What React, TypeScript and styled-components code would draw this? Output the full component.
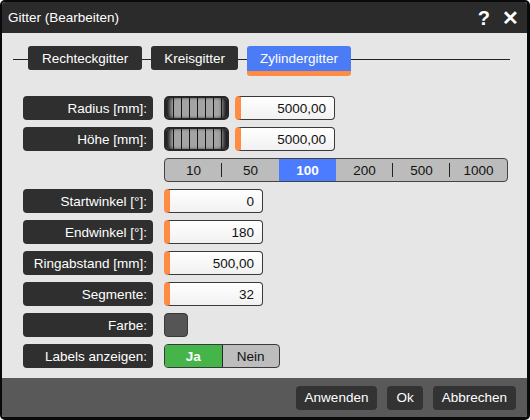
import React, { useState } from "react";
import styled, { createGlobalStyle } from "styled-components";

const GlobalStyle = createGlobalStyle`
  html, body {
    margin: 0;
    padding: 0;
    background: #ffffff;
  }
  body {
    font-family: "Liberation Sans", Arial, sans-serif;
    font-size: 13.5px;
  }
`;

const Window = styled.div`
  width: 530px;
  height: 420px;
  box-sizing: border-box;
  border: 2px solid #0a0a0a;
  border-right-width: 3px;
  border-bottom-width: 3px;
  border-radius: 5px;
  overflow: hidden;
  display: flex;
  flex-direction: column;
  background: #e6e6e6;
`;

const TitleBar = styled.div`
  height: 31px;
  flex: none;
  background: #2b2b2b;
  color: #fff;
  display: flex;
  align-items: center;
  padding: 0 8px 0 6px;
`;

const Title = styled.div`
  flex: 1;
`;

const TitleIcon = styled.span`
  font-size: 20px;
  font-weight: bold;
  margin-left: 12px;
  line-height: 1;
`;

const Body = styled.div`
  flex: 1;
  padding: 13px 16px 0 21px;
`;

const TabStrip = styled.div`
  display: flex;
  align-items: flex-start;
  height: 32px;
  margin: 0 1px 0 -10px;
  background: linear-gradient(#222, #222) no-repeat 0 13px / 100% 1px;
`;

const Tab = styled.div<{ active?: boolean }>`
  height: ${(p) => (p.active ? "25px" : "24px")};
  padding: 0 13px;
  margin-left: 9px;
  border-radius: 3px;
  display: flex;
  align-items: center;
  justify-content: center;
  color: #fff;
  background: ${(p) => (p.active ? "#4b7bf5" : "#2f2f2f")};
  border-bottom: ${(p) => (p.active ? "5px solid #ff8c42" : "none")};
  &:first-child {
    margin-left: 15px;
    padding: 0 14px;
  }
`;

const Form = styled.div`
  margin-top: 18px;
  display: flex;
  flex-direction: column;
  gap: 7px;
`;

const Row = styled.div`
  display: flex;
  align-items: center;
  height: 24px;
  gap: 6px;
`;

const Label = styled.div`
  width: 130px;
  height: 24px;
  margin-right: 5px;
  border-radius: 4px;
  background: #2f2f2f;
  color: #fff;
  display: flex;
  align-items: center;
  justify-content: flex-end;
  padding-right: 6px;
  box-sizing: border-box;
`;

const Jog = styled.div`
  width: 65px;
  height: 24px;
  box-sizing: border-box;
  border: 2px solid #262626;
  border-radius: 5px;
  background: repeating-linear-gradient(
      90deg,
      #a4a4a4 0 7px,
      #161616 7px 8px
    ),
    #a4a4a4;
  box-shadow: inset 6px 0 4px -2px #1c1c1c, inset -6px 0 4px -2px #1c1c1c;
`;

const Input = styled.div<{ w: number }>`
  width: ${(p) => p.w}px;
  height: 24px;
  box-sizing: border-box;
  border: 1px solid #3a3a3a;
  border-left: 6px solid #ff8c42;
  border-radius: 4px;
  background: linear-gradient(#ffffff, #f1f1f1);
  display: flex;
  align-items: center;
  justify-content: flex-end;
  padding-right: 8px;
  color: #111;
`;

const Steps = styled.div`
  margin-left: 141px;
  width: 344px;
  height: 24px;
  box-sizing: border-box;
  border: 1px solid #444;
  border-radius: 4px;
  background: #bcbcbc;
  display: flex;
  align-items: stretch;
  overflow: hidden;
`;

const Step = styled.div<{ active?: boolean }>`
  flex: 1;
  display: flex;
  align-items: center;
  justify-content: center;
  position: relative;
  color: ${(p) => (p.active ? "#fff" : "#111")};
  font-weight: ${(p) => (p.active ? "bold" : "normal")};
  background: ${(p) => (p.active ? "#4b7bff" : "transparent")};
  & + &::before {
    content: "";
    position: absolute;
    left: -1px;
    top: ${(p) => (p.active ? "0" : "4px")};
    bottom: ${(p) => (p.active ? "0" : "4px")};
    width: 1px;
    background: #222;
  }
`;

const Swatch = styled.div`
  width: 24px;
  height: 24px;
  box-sizing: border-box;
  border: 1px solid #3a3a3a;
  border-radius: 4px;
  background: #555555;
`;

const Toggle = styled.div`
  width: 116px;
  height: 24px;
  box-sizing: border-box;
  border: 1px solid #3a3a3a;
  border-radius: 4px;
  background: #bdbdbd;
  display: flex;
  overflow: hidden;
`;

const ToggleOption = styled.div<{ on?: boolean }>`
  flex: 1;
  display: flex;
  align-items: center;
  justify-content: center;
  background: ${(p) => (p.on ? "#45b549" : "transparent")};
  color: ${(p) => (p.on ? "#fff" : "#111")};
  font-weight: ${(p) => (p.on ? "bold" : "normal")};
  & + & {
    border-left: 1px solid #2a2a2a;
  }
`;

const Footer = styled.div`
  height: 39px;
  flex: none;
  background: #595959;
  display: flex;
  align-items: center;
  justify-content: flex-end;
  gap: 10px;
  padding-right: 11px;
`;

const Button = styled.div`
  height: 24px;
  padding: 0 9px;
  border-radius: 4px;
  background: #333333;
  color: #fff;
  display: flex;
  align-items: center;
`;

const steps = [10, 50, 100, 200, 500, 1000];

export default function App() {
  const [step, setStep] = useState(100);
  const [labels, setLabels] = useState(true);
  return (
    <>
      <GlobalStyle />
      <Window>
        <TitleBar>
          <Title>Gitter (Bearbeiten)</Title>
          <TitleIcon>?</TitleIcon>
          <TitleIcon>✕</TitleIcon>
        </TitleBar>
        <Body>
          <TabStrip>
            <Tab>Rechteckgitter</Tab>
            <Tab>Kreisgitter</Tab>
            <Tab active>Zylindergitter</Tab>
          </TabStrip>
          <Form>
            <Row>
              <Label>Radius [mm]:</Label>
              <Jog />
              <Input w={100}>5000,00</Input>
            </Row>
            <Row>
              <Label>Höhe [mm]:</Label>
              <Jog />
              <Input w={100}>5000,00</Input>
            </Row>
            <Row>
              <Steps>
                {steps.map((s) => (
                  <Step key={s} active={s === step} onClick={() => setStep(s)}>
                    {s}
                  </Step>
                ))}
              </Steps>
            </Row>
            <Row>
              <Label>Startwinkel [°]:</Label>
              <Input w={99}>0</Input>
            </Row>
            <Row>
              <Label>Endwinkel [°]:</Label>
              <Input w={99}>180</Input>
            </Row>
            <Row>
              <Label>Ringabstand [mm]:</Label>
              <Input w={99}>500,00</Input>
            </Row>
            <Row>
              <Label>Segmente:</Label>
              <Input w={99}>32</Input>
            </Row>
            <Row>
              <Label>Farbe:</Label>
              <Swatch />
            </Row>
            <Row>
              <Label>Labels anzeigen:</Label>
              <Toggle>
                <ToggleOption on={labels} onClick={() => setLabels(true)}>
                  Ja
                </ToggleOption>
                <ToggleOption on={!labels} onClick={() => setLabels(false)}>
                  Nein
                </ToggleOption>
              </Toggle>
            </Row>
          </Form>
        </Body>
        <Footer>
          <Button>Anwenden</Button>
          <Button>Ok</Button>
          <Button>Abbrechen</Button>
        </Footer>
      </Window>
    </>
  );
}
